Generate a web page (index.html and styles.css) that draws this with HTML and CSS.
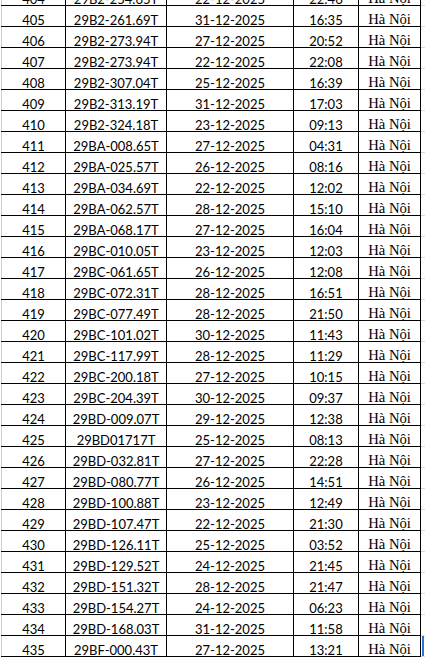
FILE: index.html
```html
<!DOCTYPE html>
<html lang="vi">
<head>
<meta charset="utf-8">
<title>Danh sách</title>
<link rel="stylesheet" href="styles.css">
</head>
<body>
<div class="sheet">
<table class="grid">
<colgroup>
<col class="c-no"><col class="c-plate"><col class="c-date"><col class="c-time"><col class="c-city"><col class="c-pad">
</colgroup>
<tbody>
<tr><td>404</td><td>29B2-254.65T</td><td>22-12-2025</td><td>22:46</td><td class="city">Hà Nội</td><td class="pad"></td></tr>
<tr><td>405</td><td>29B2-261.69T</td><td>31-12-2025</td><td>16:35</td><td class="city">Hà Nội</td><td class="pad"></td></tr>
<tr><td>406</td><td>29B2-273.94T</td><td>27-12-2025</td><td>20:52</td><td class="city">Hà Nội</td><td class="pad"></td></tr>
<tr><td>407</td><td>29B2-273.94T</td><td>22-12-2025</td><td>22:08</td><td class="city">Hà Nội</td><td class="pad"></td></tr>
<tr><td>408</td><td>29B2-307.04T</td><td>25-12-2025</td><td>16:39</td><td class="city">Hà Nội</td><td class="pad"></td></tr>
<tr><td>409</td><td>29B2-313.19T</td><td>31-12-2025</td><td>17:03</td><td class="city">Hà Nội</td><td class="pad"></td></tr>
<tr><td>410</td><td>29B2-324.18T</td><td>23-12-2025</td><td>09:13</td><td class="city">Hà Nội</td><td class="pad"></td></tr>
<tr><td>411</td><td>29BA-008.65T</td><td>27-12-2025</td><td>04:31</td><td class="city">Hà Nội</td><td class="pad"></td></tr>
<tr><td>412</td><td>29BA-025.57T</td><td>26-12-2025</td><td>08:16</td><td class="city">Hà Nội</td><td class="pad"></td></tr>
<tr><td>413</td><td>29BA-034.69T</td><td>22-12-2025</td><td>12:02</td><td class="city">Hà Nội</td><td class="pad"></td></tr>
<tr><td>414</td><td>29BA-062.57T</td><td>28-12-2025</td><td>15:10</td><td class="city">Hà Nội</td><td class="pad"></td></tr>
<tr><td>415</td><td>29BA-068.17T</td><td>27-12-2025</td><td>16:04</td><td class="city">Hà Nội</td><td class="pad"></td></tr>
<tr><td>416</td><td>29BC-010.05T</td><td>23-12-2025</td><td>12:03</td><td class="city">Hà Nội</td><td class="pad"></td></tr>
<tr><td>417</td><td>29BC-061.65T</td><td>26-12-2025</td><td>12:08</td><td class="city">Hà Nội</td><td class="pad"></td></tr>
<tr><td>418</td><td>29BC-072.31T</td><td>28-12-2025</td><td>16:51</td><td class="city">Hà Nội</td><td class="pad"></td></tr>
<tr><td>419</td><td>29BC-077.49T</td><td>28-12-2025</td><td>21:50</td><td class="city">Hà Nội</td><td class="pad"></td></tr>
<tr><td>420</td><td>29BC-101.02T</td><td>30-12-2025</td><td>11:43</td><td class="city">Hà Nội</td><td class="pad"></td></tr>
<tr><td>421</td><td>29BC-117.99T</td><td>28-12-2025</td><td>11:29</td><td class="city">Hà Nội</td><td class="pad"></td></tr>
<tr><td>422</td><td>29BC-200.18T</td><td>27-12-2025</td><td>10:15</td><td class="city">Hà Nội</td><td class="pad"></td></tr>
<tr><td>423</td><td>29BC-204.39T</td><td>30-12-2025</td><td>09:37</td><td class="city">Hà Nội</td><td class="pad"></td></tr>
<tr><td>424</td><td>29BD-009.07T</td><td>29-12-2025</td><td>12:38</td><td class="city">Hà Nội</td><td class="pad"></td></tr>
<tr><td>425</td><td>29BD01717T</td><td>25-12-2025</td><td>08:13</td><td class="city">Hà Nội</td><td class="pad"></td></tr>
<tr><td>426</td><td>29BD-032.81T</td><td>27-12-2025</td><td>22:28</td><td class="city">Hà Nội</td><td class="pad"></td></tr>
<tr><td>427</td><td>29BD-080.77T</td><td>26-12-2025</td><td>14:51</td><td class="city">Hà Nội</td><td class="pad"></td></tr>
<tr><td>428</td><td>29BD-100.88T</td><td>23-12-2025</td><td>12:49</td><td class="city">Hà Nội</td><td class="pad"></td></tr>
<tr><td>429</td><td>29BD-107.47T</td><td>22-12-2025</td><td>21:30</td><td class="city">Hà Nội</td><td class="pad"></td></tr>
<tr><td>430</td><td>29BD-126.11T</td><td>25-12-2025</td><td>03:52</td><td class="city">Hà Nội</td><td class="pad"></td></tr>
<tr><td>431</td><td>29BD-129.52T</td><td>24-12-2025</td><td>21:45</td><td class="city">Hà Nội</td><td class="pad"></td></tr>
<tr><td>432</td><td>29BD-151.32T</td><td>28-12-2025</td><td>21:47</td><td class="city">Hà Nội</td><td class="pad"></td></tr>
<tr><td>433</td><td>29BD-154.27T</td><td>24-12-2025</td><td>06:23</td><td class="city">Hà Nội</td><td class="pad"></td></tr>
<tr><td>434</td><td>29BD-168.03T</td><td>31-12-2025</td><td>11:58</td><td class="city">Hà Nội</td><td class="pad"></td></tr>
<tr class="last"><td>435</td><td>29BF-000.43T</td><td>27-12-2025</td><td>13:21</td><td class="city">Hà Nội</td><td class="pad"><div class="sel"></div></td></tr>
</tbody>
</table>
</div>
</body>
</html>
```

FILE: styles.css
```css
html, body {
  margin: 0;
  padding: 0;
  background: #ffffff;
  overflow: hidden;
}
.sheet {
  margin-top: -16px;
  padding-left: 1px;
  width: 460px;
}
.grid {
  border-collapse: collapse;
  table-layout: fixed;
  width: 444px;
  font-family: Lato, "Liberation Sans", sans-serif;
  font-size: 13px;
  color: #000;
}
.c-no { width: 64px; }
.c-plate { width: 101px; }
.c-date { width: 127px; }
.c-time { width: 65px; }
.c-city { width: 62px; }
.c-pad { width: 25px; }
.grid tr { height: 21px; }
.grid td {
  border: 1px solid #000;
  padding: 0;
  height: 20px;
  line-height: 12px;
  text-align: center;
  vertical-align: bottom;
  white-space: nowrap;
  overflow: hidden;
}
.grid td:first-child {
  border-left-color: #d0d0d0;
}
.grid td.city {
  font-family: "Liberation Serif", serif;
  font-size: 14.67px;
  line-height: 14px;
}
.grid td.pad {
  border-top-color: #d9d9d9;
  border-bottom-color: #d9d9d9;
  border-right: 0;
  position: relative;
}
.sel {
  position: absolute;
  left: 1px;
  top: -1px;
  bottom: -1px;
  width: 2px;
  background: #2f6fe0;
}
```
